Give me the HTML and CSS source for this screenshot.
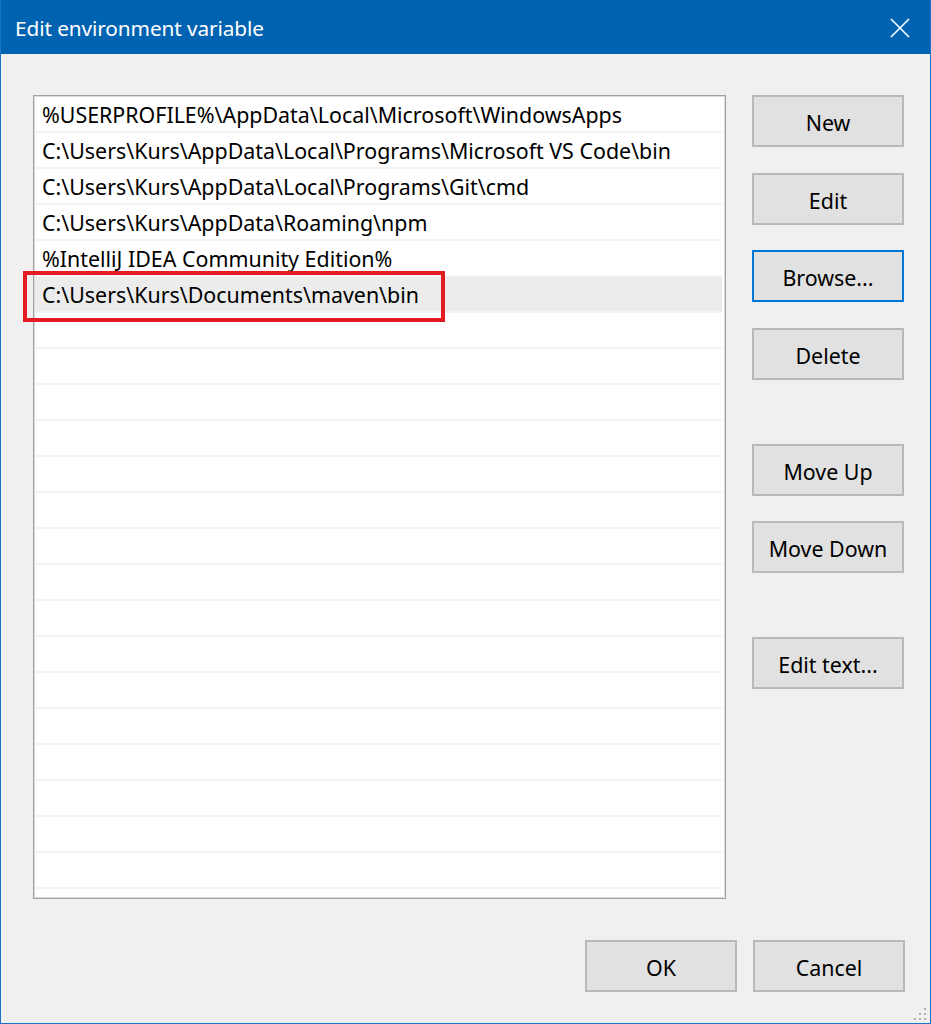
FILE: index.html
```html
<!DOCTYPE html>
<html>
<head>
<meta charset="utf-8">
<title>Edit environment variable</title>
<link rel="stylesheet" href="styles.css">
</head>
<body>
<div class="window">
  <div class="titlebar">
    <span class="title">Edit environment variable</span>
    <span class="close" aria-label="Close">
      <svg width="20" height="20" viewBox="0 0 20 20"><path d="M1 1 L19 19 M19 1 L1 19" stroke="#fff" stroke-width="1.6" fill="none"/></svg>
    </span>
  </div>
  <div class="content">
    <div class="main">
      <div class="list">
        <div class="row">%USERPROFILE%\AppData\Local\Microsoft\WindowsApps</div>
        <div class="row">C:\Users\Kurs\AppData\Local\Programs\Microsoft VS Code\bin</div>
        <div class="row">C:\Users\Kurs\AppData\Local\Programs\Git\cmd</div>
        <div class="row">C:\Users\Kurs\AppData\Roaming\npm</div>
        <div class="row">%IntelliJ IDEA Community Edition%</div>
        <div class="row selected">C:\Users\Kurs\Documents\maven\bin<span class="highlight"></span></div>
        <div class="row"></div>
        <div class="row"></div>
        <div class="row"></div>
        <div class="row"></div>
        <div class="row"></div>
        <div class="row"></div>
        <div class="row"></div>
        <div class="row"></div>
        <div class="row"></div>
        <div class="row"></div>
        <div class="row"></div>
        <div class="row"></div>
        <div class="row"></div>
        <div class="row"></div>
        <div class="row"></div>
        <div class="row"></div>
      </div>
      <div class="side">
        <button class="btn">New</button>
        <button class="btn gap-s1">Edit</button>
        <button class="btn focus gap-s2">Browse...</button>
        <button class="btn gap-s1">Delete</button>
        <button class="btn gap-l">Move Up</button>
        <button class="btn gap-s2">Move Down</button>
        <button class="btn gap-l">Edit text...</button>
      </div>
    </div>
    <div class="footer">
      <button class="btn">OK</button>
      <button class="btn">Cancel</button>
    </div>
  </div>
  <svg class="grip" width="14" height="14" viewBox="0 0 14 14">
    <rect x="11" y="1" width="2" height="2" fill="#b0b0b0"/>
    <rect x="6" y="6" width="2" height="2" fill="#b0b0b0"/>
    <rect x="11" y="6" width="2" height="2" fill="#b0b0b0"/>
    <rect x="1" y="11" width="2" height="2" fill="#b0b0b0"/>
    <rect x="6" y="11" width="2" height="2" fill="#b0b0b0"/>
    <rect x="11" y="11" width="2" height="2" fill="#b0b0b0"/>
  </svg>
</div>
</body>
</html>
```
FILE: styles.css
```css
* { box-sizing: border-box; }
html, body { margin: 0; padding: 0; }
body {
  font-family: "Noto Sans", "Open Sans", "DejaVu Sans", sans-serif;
  background: #f0f0f0;
}
.window {
  position: relative;
  width: 931px;
  height: 1024px;
  background: #f0f0f0;
  border-left: 1px solid #1a73c4;
  border-right: 1px solid #1a73c4;
  border-bottom: 1px solid #1a73c4;
  display: flex;
  flex-direction: column;
  overflow: hidden;
}
.titlebar {
  height: 54px;
  margin: 0 -1px;
  background: #0063b1;
  display: flex;
  align-items: center;
  justify-content: space-between;
  padding: 0 21px 0 15px;
  color: #fff;
}
.title {
  font-size: 20.8px;
  letter-spacing: -0.1px;
  padding-top: 2px;
}
.close { display: flex; padding-top: 1px; }
.content {
  flex: 1;
  display: flex;
  flex-direction: column;
  padding: 41px 25px 0 32px;
}
.main {
  display: flex;
  gap: 26px;
}
.list {
  width: 693px;
  height: 804px;
  background: #fff;
  border: 1px solid #a0a0a0;
  box-shadow: inset 0 0 0 1px #dcdcdc;
  padding: 1px 3px 0 1px;
}
.row {
  position: relative;
  height: 36px;
  border-bottom: 2px solid #f3f3f3;
  padding: 1px 0 0 7px;
  font-size: 21.4px;
  line-height: 34px;
  color: #000;
  white-space: nowrap;
}
.row.selected { background: #ececec; }
.highlight {
  position: absolute;
  left: -12px;
  top: -6px;
  width: 422px;
  height: 51px;
  border: 4px solid #e41b23;
}
.side {
  width: 152px;
  display: flex;
  flex-direction: column;
}
.btn {
  width: 152px;
  height: 52px;
  background: #e1e1e1;
  border: 2px solid #b9b9b9;
  font-family: inherit;
  font-size: 21.4px;
  color: #000;
  padding: 2px 0 0;
  margin: 0;
}
.btn.focus { border-color: #0078d7; }
.gap-s1 { margin-top: 26px; }
.gap-s2 { margin-top: 25px; }
.gap-l { margin-top: 64px; }
.footer {
  display: flex;
  justify-content: flex-end;
  gap: 16px;
  margin-top: 41px;
}
.grip {
  position: absolute;
  right: 3px;
  bottom: 2px;
}
```
